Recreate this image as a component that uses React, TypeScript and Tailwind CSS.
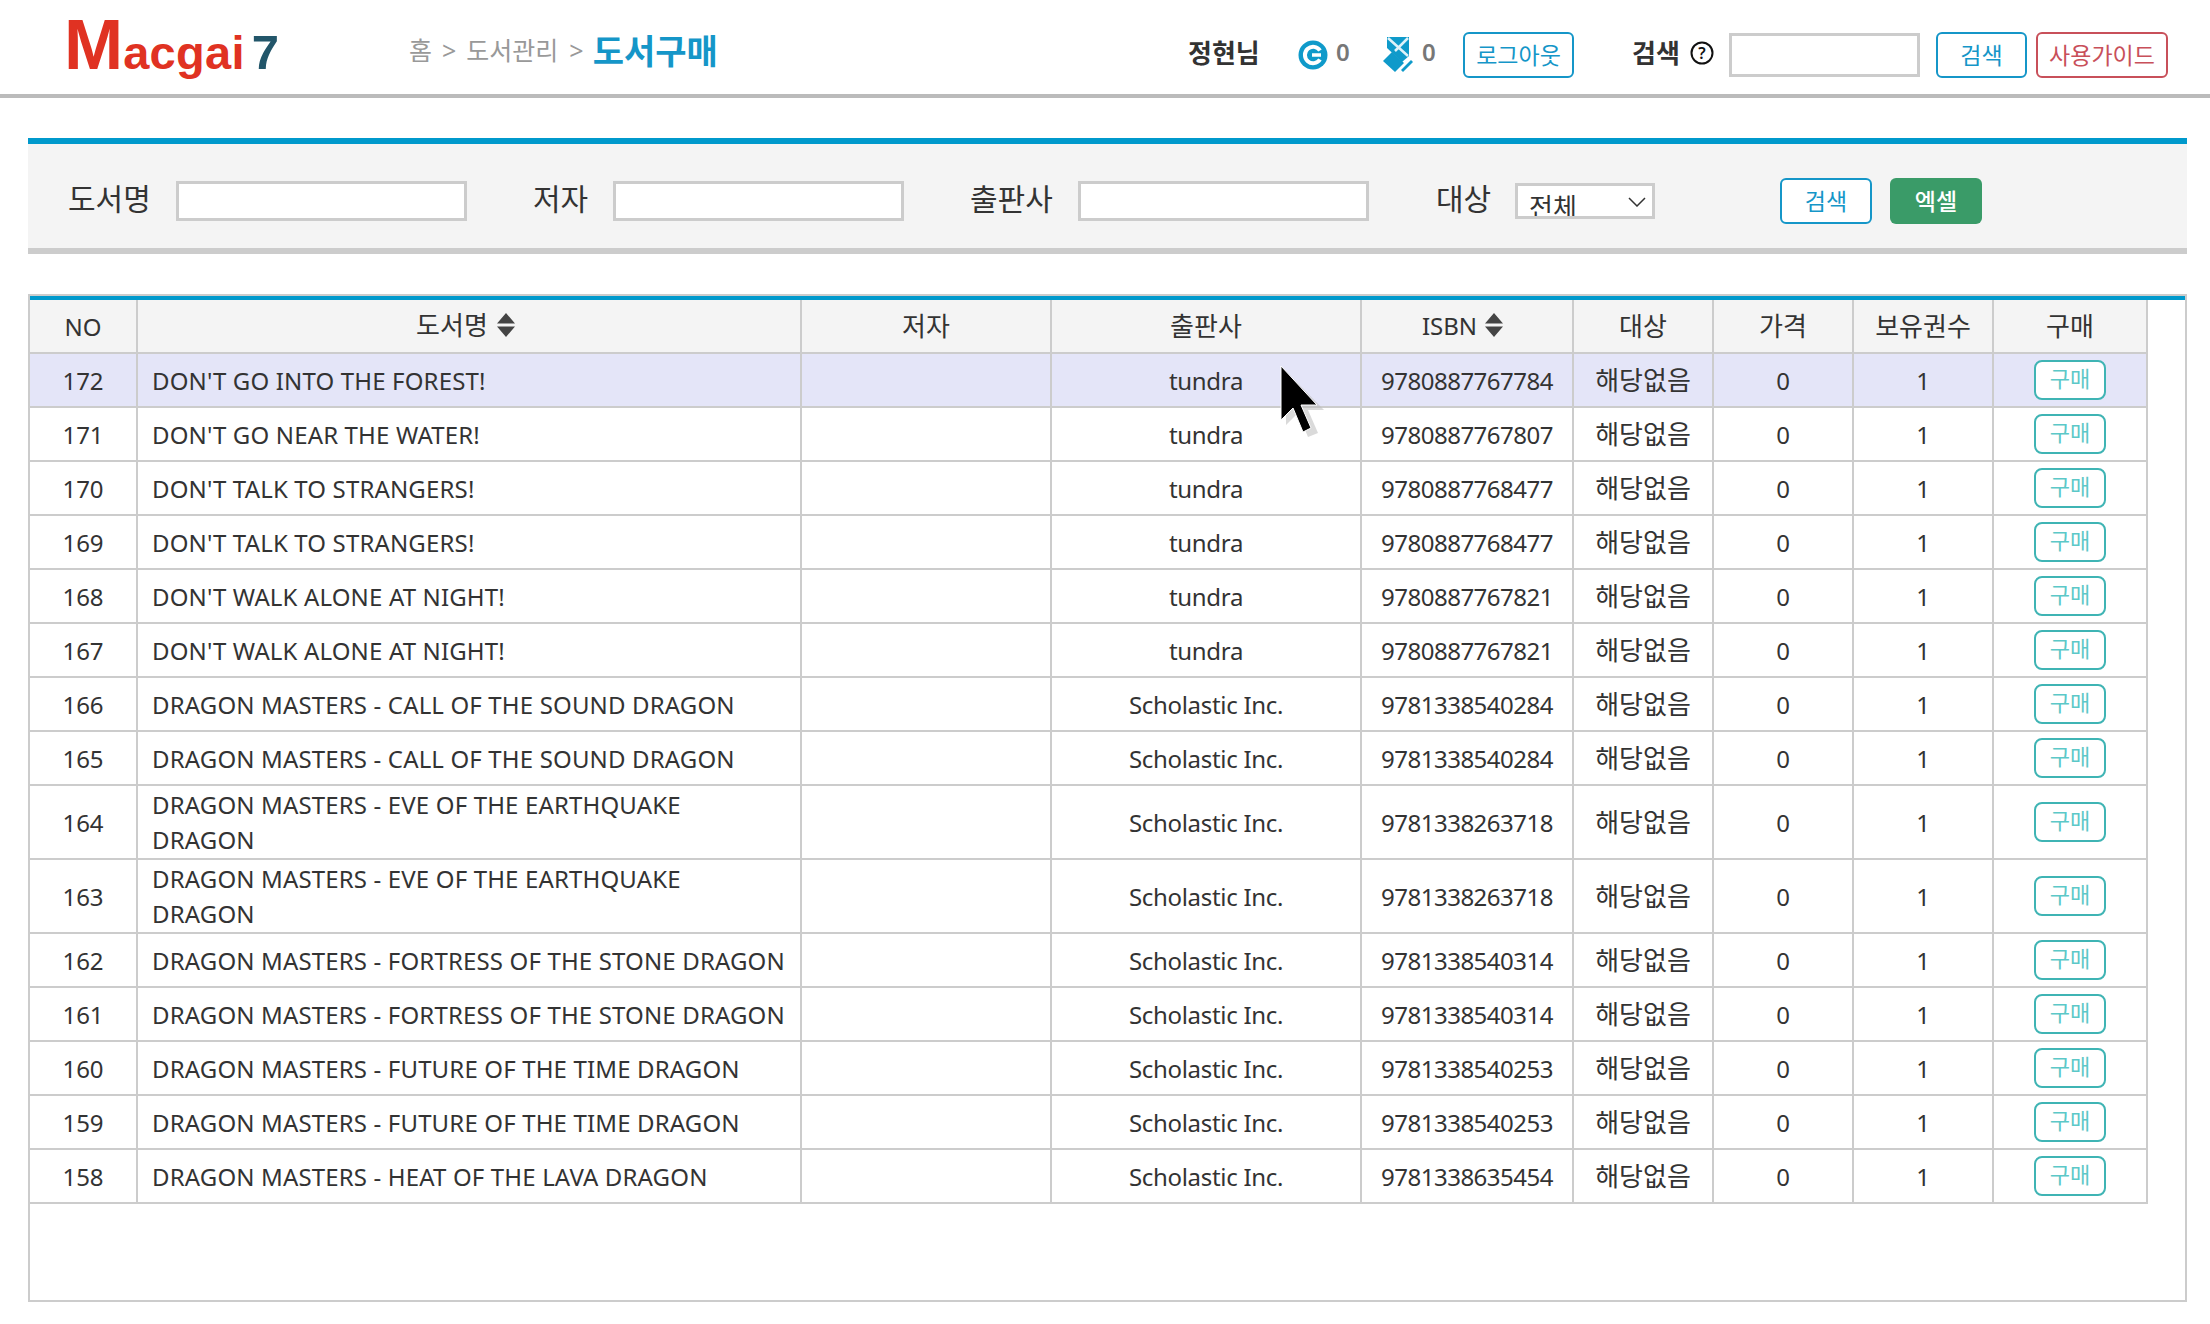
const books = [
  { no: 172, title: "DON'T GO INTO THE FOREST!", pub: "tundra", isbn: "9780887767784" },
  { no: 171, title: "DON'T GO NEAR THE WATER!", pub: "tundra", isbn: "9780887767807" },
  { no: 170, title: "DON'T TALK TO STRANGERS!", pub: "tundra", isbn: "9780887768477" },
  { no: 169, title: "DON'T TALK TO STRANGERS!", pub: "tundra", isbn: "9780887768477" },
  { no: 168, title: "DON'T WALK ALONE AT NIGHT!", pub: "tundra", isbn: "9780887767821" },
  { no: 167, title: "DON'T WALK ALONE AT NIGHT!", pub: "tundra", isbn: "9780887767821" },
  { no: 166, title: "DRAGON MASTERS - CALL OF THE SOUND DRAGON", pub: "Scholastic Inc.", isbn: "9781338540284" },
  { no: 165, title: "DRAGON MASTERS - CALL OF THE SOUND DRAGON", pub: "Scholastic Inc.", isbn: "9781338540284" },
  { no: 164, title: "DRAGON MASTERS - EVE OF THE EARTHQUAKE\nDRAGON", pub: "Scholastic Inc.", isbn: "9781338263718" },
  { no: 163, title: "DRAGON MASTERS - EVE OF THE EARTHQUAKE\nDRAGON", pub: "Scholastic Inc.", isbn: "9781338263718" },
  { no: 162, title: "DRAGON MASTERS - FORTRESS OF THE STONE DRAGON", pub: "Scholastic Inc.", isbn: "9781338540314" },
  { no: 161, title: "DRAGON MASTERS - FORTRESS OF THE STONE DRAGON", pub: "Scholastic Inc.", isbn: "9781338540314" },
  { no: 160, title: "DRAGON MASTERS - FUTURE OF THE TIME DRAGON", pub: "Scholastic Inc.", isbn: "9781338540253" },
  { no: 159, title: "DRAGON MASTERS - FUTURE OF THE TIME DRAGON", pub: "Scholastic Inc.", isbn: "9781338540253" },
  { no: 158, title: "DRAGON MASTERS - HEAT OF THE LAVA DRAGON", pub: "Scholastic Inc.", isbn: "9781338635454" },
];

const SortIcon = () => (
  <svg width="20" height="24" viewBox="0 0 20 24" className="inline-block shrink-0">
    <path d="M10 0 L19 10.5 H1 Z M1 13.5 H19 L10 24 Z" fill="#444" />
  </svg>
);

const CoinIcon = () => (
  <svg width="30" height="30" viewBox="0 0 30 30" className="shrink-0">
    <circle cx="15" cy="15" r="14.5" fill="#0f9aca" />
    <path d="M22 10.5 A8.2 8.2 0 1 0 22 19.5" fill="none" stroke="#fff" strokeWidth="4" />
    <path d="M14 15 H23" stroke="#fff" strokeWidth="3.5" />
  </svg>
);

const TicketIcon = () => (
  <svg width="30" height="36" viewBox="0 0 30 36" className="shrink-0">
    <path d="M4 0 H26 V19 L19 25 L4 11 Z" fill="#0f9aca" />
    <path d="M5 1 L25 19 M25 1 L12 14" stroke="#dff2f9" strokeWidth="2.5" />
    <path d="M0 24 L9 15 L21 26 L12 35 Z" fill="#0f9aca" />
    <path d="M18 33 L28 23 L30 25 L20 35 Z" fill="#0f9aca" />
  </svg>
);

const CursorIcon = () => (
  <svg width="48" height="76" viewBox="0 0 48 76" className="absolute left-[1278px] top-[364px]">
    <path d="M5 4 V58 L17 46 L27 70 L37 66 L27 43 H43 Z" fill="#bbb" opacity="0.55" transform="translate(3 3)" />
    <path d="M3 2 V56 L15 44 L25 68 L33 64 L23 41 H39 Z" fill="#000" stroke="#fff" strokeWidth="1" />
  </svg>
);

const thClass = "border-r-2 border-b-2 border-[#ccc] bg-[#f4f4f4] font-normal text-[26px] p-0 h-[54px]";
const tdClass = "border-r-2 border-b-2 border-[#ccc] p-0 text-center";

export default function App() {
  return (
    <div
      className="relative w-[2210px] h-[1324px] overflow-hidden bg-white text-[#333]"
      style={{ fontFamily: '"Noto Sans", "Noto Sans CJK KR", sans-serif' }}
    >
      <header className="flex items-start h-[98px] border-b-4 border-[#bbb]">
        <div
          className="ml-[64px] mt-[3px] w-[345px] flex items-baseline font-bold text-[#e03222] leading-[84px]"
          style={{ fontFamily: '"Liberation Sans", sans-serif' }}
        >
          <span className="text-[71px]">M</span>
          <span className="text-[47px] tracking-[0.3px]">acgai</span>
          <span className="text-[49px] text-[#22566a] ml-[7px]">7</span>
        </div>
        <div className="flex items-center h-[96px] text-[25px] text-[#999] w-[779px] mt-[3px]">
          <span>홈</span>
          <span className="ml-[10px]">&gt;</span>
          <span className="ml-[10px]">도서관리</span>
          <span className="ml-[11px]">&gt;</span>
          <span className="ml-[9px] text-[34px] font-bold text-[#1596c8]">도서구매</span>
        </div>
        <div className="flex items-center h-[96px] mt-[7px] text-[24px]">
          <span className="font-bold text-[26px] w-[110px] -mt-[4px] text-[#333]">정현님</span>
          <CoinIcon />
          <span className="ml-[8px] w-[47px] -mt-[6px] font-semibold text-[#777]">0</span>
          <TicketIcon />
          <span className="ml-[9px] w-[41px] -mt-[6px] font-semibold text-[#777]">0</span>
          <button className="w-[111px] h-[46px] border-2 border-[#1596c8] rounded-md text-[23px] text-[#1596c8] bg-white">
            로그아웃
          </button>
          <span className="ml-[58px] w-[46px] whitespace-nowrap font-bold text-[26px] -mt-[4px]">검색</span>
          <svg width="24" height="24" viewBox="0 0 24 24" className="ml-[12px] shrink-0 -mt-[4px]">
            <circle cx="12" cy="12" r="10.5" fill="none" stroke="#111" strokeWidth="2" />
            <text x="12" y="18" textAnchor="middle" fontSize="16" fontWeight="600" fill="#111">?</text>
          </svg>
          <input className="ml-[15px] w-[191px] h-[44px] border-[3px] border-[#ccc] bg-white" />
          <button className="ml-[16px] w-[91px] h-[46px] border-2 border-[#1596c8] rounded-md text-[23px] text-[#1596c8] bg-white">
            검색
          </button>
          <button className="ml-[9px] w-[132px] h-[46px] border-2 border-[#c8505a] rounded-md text-[23px] text-[#c8505a] bg-white">
            사용가이드
          </button>
        </div>
      </header>

      <section className="mt-[40px] ml-[28px] w-[2159px] h-[116px] pt-[10px] border-t-[6px] border-b-[6px] border-t-[#0099cc] border-b-[#ccc] bg-[#f4f4f4] flex items-center text-[30px] text-[#333]">
        <span className="ml-[40px] w-[108px] -mt-[6px]">도서명</span>
        <input className="w-[291px] h-[40px] border-[3px] border-[#ccc] bg-white" />
        <span className="ml-[66px] w-[80px] -mt-[6px]">저자</span>
        <input className="w-[291px] h-[40px] border-[3px] border-[#ccc] bg-white" />
        <span className="ml-[66px] w-[108px] -mt-[6px]">출판사</span>
        <input className="w-[291px] h-[40px] border-[3px] border-[#ccc] bg-white" />
        <span className="ml-[67px] w-[79px] -mt-[6px]">대상</span>
        <div className="relative w-[140px] h-[36px] shrink-0">
          <select className="w-full h-full appearance-none border-[3px] border-[#ccc] bg-white text-[26px] pl-[11px] leading-[36px] pt-[3px] outline-none text-[#333]">
            <option>전체</option>
          </select>
          <svg width="18" height="10" viewBox="0 0 18 10" className="absolute right-[9px] top-[14px]">
            <path d="M1 1 L9 9 L17 1" fill="none" stroke="#333" strokeWidth="1.5" />
          </svg>
        </div>
        <button className="ml-[125px] w-[92px] h-[46px] border-2 border-[#1596c8] rounded-md text-[23px] text-[#1596c8] bg-white">
          검색
        </button>
        <button className="ml-[18px] w-[92px] h-[46px] rounded-md text-[23px] font-medium text-white bg-[#3a9b68]">
          엑셀
        </button>
      </section>

      <section className="mt-[40px] ml-[28px] w-[2159px] h-[1008px] border-2 border-[#ccc]">
        <div className="h-[4px] bg-[#0099cc]" />
        <table className="table-fixed w-[2118px] border-separate border-spacing-0 text-[24px] leading-[35px]">
          <colgroup>
            <col className="w-[108px]" />
            <col className="w-[664px]" />
            <col className="w-[250px]" />
            <col className="w-[310px]" />
            <col className="w-[212px]" />
            <col className="w-[140px]" />
            <col className="w-[140px]" />
            <col className="w-[140px]" />
            <col className="w-[154px]" />
          </colgroup>
          <thead>
            <tr>
              <th className={`${thClass} !text-[24px]`}>NO</th>
              <th className={thClass}>
                <div className="flex items-center justify-center gap-[8px] -mt-[2px] pr-[6px]">
                  도서명 <SortIcon />
                </div>
              </th>
              <th className={thClass}>저자</th>
              <th className={thClass}>출판사</th>
              <th className={`${thClass} !text-[24px]`}>
                <div className="flex items-center justify-center gap-[7px] -mt-[2px] pr-[8px]">
                  ISBN <SortIcon />
                </div>
              </th>
              <th className={thClass}>대상</th>
              <th className={thClass}>가격</th>
              <th className={thClass}>보유권수</th>
              <th className={thClass}>구매</th>
            </tr>
          </thead>
          <tbody>
            {books.map((book, index) => (
              <tr key={book.no} className={index === 0 ? "bg-[#e4e5f8]" : "bg-white"}>
                <td className={`${tdClass} h-[54px]`}>{book.no}</td>
                <td className={`${tdClass} !text-left pl-[14px] py-px whitespace-pre-line tracking-[0.15px]`}>{book.title}</td>
                <td className={tdClass}></td>
                <td className={`${tdClass} tracking-[-0.3px]`}>{book.pub}</td>
                <td className={`${tdClass} tracking-[-0.5px]`}>{book.isbn}</td>
                <td className={`${tdClass} text-[26px]`}>해당없음</td>
                <td className={tdClass}>0</td>
                <td className={tdClass}>1</td>
                <td className={tdClass}>
                  <button className="w-[72px] h-[40px] align-middle border-2 border-[#3fb4b4] rounded-lg bg-white text-[22px] leading-[30px] pb-[5px] text-[#5cc8c8]">
                    구매
                  </button>
                </td>
              </tr>
            ))}
          </tbody>
        </table>
      </section>

      <CursorIcon />
    </div>
  );
}
